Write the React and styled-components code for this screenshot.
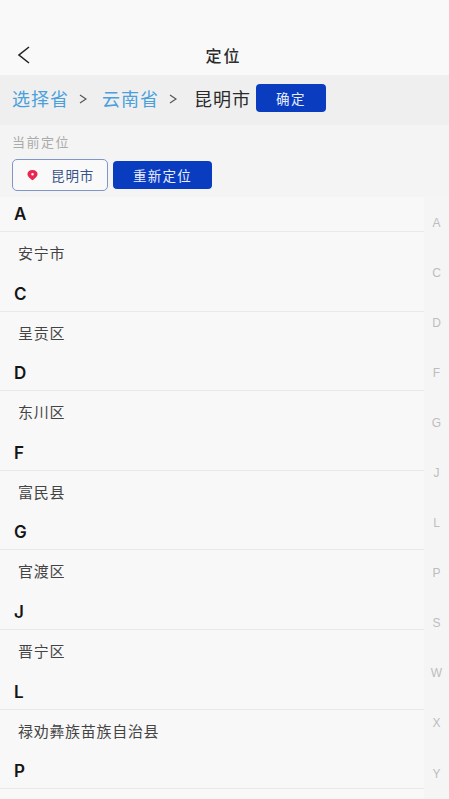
import React from 'react'
import styled, { createGlobalStyle } from 'styled-components'

const GlobalStyle = createGlobalStyle`
  html, body {
    margin: 0;
    padding: 0;
    height: 100%;
    overflow: hidden;
    background: #f8f8f8;
  }
  * {
    box-sizing: border-box;
  }
`

const Page = styled.div`
  width: 449px;
  height: 799px;
  overflow: hidden;
  display: flex;
  flex-direction: column;
  background: #f8f8f8;
  font-family: 'Liberation Sans', 'Noto Sans CJK SC', sans-serif;
`

const Header = styled.header`
  height: 75px;
  flex-shrink: 0;
  padding: 34px 17px 0;
  display: flex;
  align-items: center;
  background: #f9f9f9;
  h1 {
    flex: 1;
    margin: 0 0 0 -16px;
    text-align: center;
    font-size: 16px;
    letter-spacing: 2px;
    font-weight: 500;
    color: #2c2c2c;
  }
`

const Crumbs = styled.nav`
  height: 50px;
  flex-shrink: 0;
  padding: 0 0 5px 12px;
  display: flex;
  align-items: center;
  background: #efefef;
  font-size: 18px;
  letter-spacing: 1px;
`

const Crumb = styled.span`
  color: ${p => (p.$active ? '#2a2a2a' : '#4a9fdc')};
`

const Sep = styled.svg`
  width: 8px;
  height: 10px;
  margin: ${p => p.$margin};
  fill: none;
  stroke: #555;
  stroke-width: 1.2;
`

const Button = styled.button`
  height: 28px;
  width: ${p => p.$width}px;
  margin-left: ${p => p.$gap || 0}px;
  border: none;
  border-radius: 4px;
  padding: 0;
  background: #0a3cc0;
  color: #e8eeff;
  font-family: inherit;
  font-size: 13.5px;
  letter-spacing: ${p => p.$spacing}px;
`

const Current = styled.section`
  height: 72px;
  flex-shrink: 0;
  padding: 9px 12px 0;
  background: #f4f4f4;
`

const CurrentLabel = styled.div`
  font-size: 13px;
  line-height: 17px;
  letter-spacing: 1.5px;
  color: #aaa;
`

const CurrentRow = styled.div`
  margin-top: 8px;
  display: flex;
  align-items: center;
  gap: 5px;
`

const CityTag = styled.div`
  width: 96px;
  height: 32px;
  padding-left: 14px;
  display: flex;
  align-items: center;
  gap: 13px;
  border: 1px solid #7f97c6;
  border-radius: 5px;
  background: #f9f9f9;
  font-size: 13.5px;
  letter-spacing: 0.9px;
  color: #3a5288;
  svg {
    width: 11px;
    height: 12px;
  }
`

const Body = styled.div`
  flex: 1;
  min-height: 0;
  display: flex;
`

const List = styled.div`
  flex: 1;
  min-width: 0;
`

const GroupTitle = styled.div`
  height: 35px;
  padding: 7px 0 0 14px;
  border-bottom: 1px solid #e9e9e9;
  font-size: 17px;
  line-height: 20px;
  font-weight: 600;
  font-family: 'Inter', sans-serif;
  color: #151515;
`

const Item = styled.div`
  height: 44.6px;
  padding: 13px 0 0 18px;
  font-size: 15px;
  line-height: 18px;
  letter-spacing: 0.7px;
  color: #444;
`

const IndexBar = styled.aside`
  width: 25px;
  flex-shrink: 0;
  display: flex;
  flex-direction: column;
  background: #f5f5f5;
`

const IndexLetter = styled.span`
  height: 50.1px;
  flex-shrink: 0;
  display: flex;
  align-items: center;
  justify-content: center;
  padding-top: 1px;
  font-size: 12px;
  color: #bdbdbd;
`

const groups = [
  ['A', '安宁市'],
  ['C', '呈贡区'],
  ['D', '东川区'],
  ['F', '富民县'],
  ['G', '官渡区'],
  ['J', '晋宁区'],
  ['L', '禄劝彝族苗族自治县'],
  ['P', ''],
]

const letters = ['A', 'C', 'D', 'F', 'G', 'J', 'L', 'P', 'S', 'W', 'X', 'Y']

const Chevron = ({ margin }) => (
  <Sep $margin={margin} viewBox="0 0 8 10">
    <path d="M1 1l6 4-6 4" />
  </Sep>
)

export default function App() {
  return (
    <Page>
      <GlobalStyle />
      <Header>
        <svg width="14" height="18" viewBox="0 0 14 18" fill="none" stroke="#222" strokeWidth="1.6">
          <path d="M12 1L2 9l10 8" />
        </svg>
        <h1>定位</h1>
      </Header>
      <Crumbs>
        <Crumb>选择省</Crumb>
        <Chevron margin="2px 15px 0 10px" />
        <Crumb>云南省</Crumb>
        <Chevron margin="2px 17px 0 10px" />
        <Crumb $active>昆明市</Crumb>
        <Button $width={70} $gap={5} $spacing={1.5}>确定</Button>
      </Crumbs>
      <Current>
        <CurrentLabel>当前定位</CurrentLabel>
        <CurrentRow>
          <CityTag>
            <svg viewBox="0 0 12 12">
              <path
                fill="#e8264f"
                fillRule="evenodd"
                d="M6 0.5C2.6 0.5 0.5 2.6 0.5 5 0.5 7.8 3.8 10.4 6 11.8 8.2 10.4 11.5 7.8 11.5 5 11.5 2.6 9.4 0.5 6 0.5zM6 3.8a1.4 1.4 0 1 1 0 2.8 1.4 1.4 0 0 1 0-2.8z"
              />
            </svg>
            昆明市
          </CityTag>
          <Button $width={99} $spacing={1.2}>重新定位</Button>
        </CurrentRow>
      </Current>
      <Body>
        <List>
          {groups.map(([letter, city]) => (
            <div key={letter}>
              <GroupTitle>{letter}</GroupTitle>
              {city && <Item>{city}</Item>}
            </div>
          ))}
        </List>
        <IndexBar>
          {letters.map(l => (
            <IndexLetter key={l}>{l}</IndexLetter>
          ))}
        </IndexBar>
      </Body>
    </Page>
  )
}
